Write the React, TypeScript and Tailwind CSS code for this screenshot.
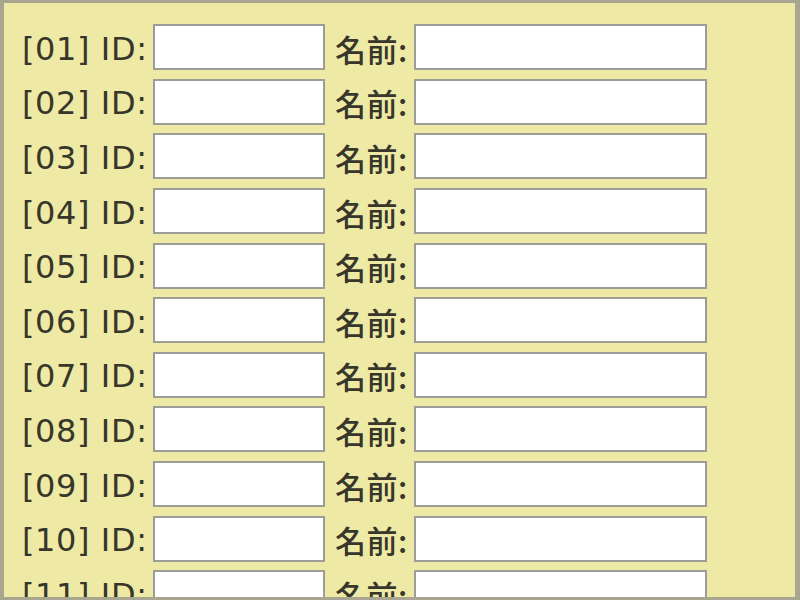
import React from "react";

const rows = Array.from({ length: 12 }, (_, i) => String(i + 1).padStart(2, "0"));

export default function App() {
  return (
    <div
      className="w-[800px] h-[600px] overflow-hidden bg-[#eeeaa6] border-t-[3px] border-l-[4px] border-r-[5px] border-b-[3px] border-[#a8a690] pt-[17px] pl-[18px] text-[#37362a]"
      style={{ fontFamily: '"DejaVu Sans", Verdana, "Noto Sans CJK JP", sans-serif' }}
    >
      <div className="flex flex-col">
        {rows.map((n) => (
          <div key={n} className="flex items-center h-[54.6px] shrink-0">
            <span className="w-[131px] shrink-0 pt-[3px] text-[32px] leading-none tracking-[0.6px] whitespace-nowrap">
              [{n}] ID:
            </span>
            <div className="w-[172px] h-[46px] shrink-0 bg-white border-2 border-[#9c9c98]" />
            <span
              className="w-[89px] shrink-0 pl-[10px] pt-[2px] text-[31px] font-medium leading-none whitespace-nowrap tracking-[0.5px]"
              style={{ fontFamily: '"Noto Sans CJK JP", sans-serif' }}
            >
              名前:
            </span>
            <div className="w-[293px] h-[46px] shrink-0 bg-white border-2 border-[#9c9c98]" />
          </div>
        ))}
      </div>
    </div>
  );
}
